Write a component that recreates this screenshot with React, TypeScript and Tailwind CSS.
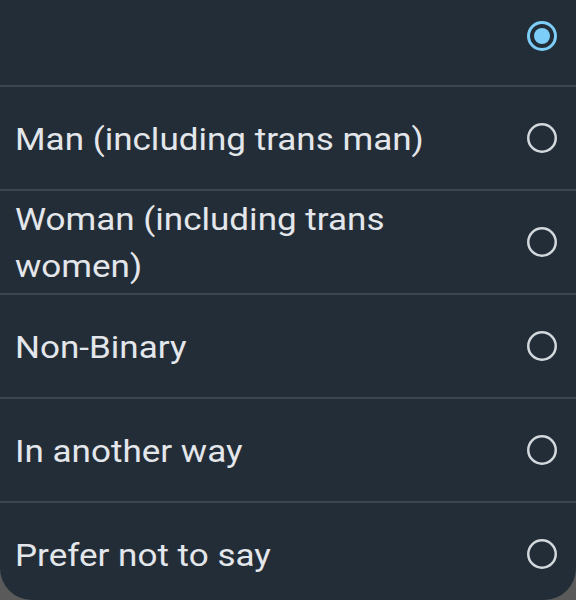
const options = [
  "Man (including trans man)",
  "Woman (including trans women)",
  "Non-Binary",
  "In another way",
  "Prefer not to say",
];

const Radio = ({ checked }: { checked?: boolean }) => (
  <svg width="34" height="34" viewBox="0 0 34 34" className="shrink-0">
    {checked ? (
      <>
        <circle cx="17" cy="17" r="13.5" fill="none" stroke="#7ccdf8" strokeWidth="3" />
        <circle cx="17" cy="17" r="8" fill="#7ccdf8" />
      </>
    ) : (
      <circle cx="17" cy="17" r="13.75" fill="none" stroke="#d3d8dc" strokeWidth="2.5" />
    )}
  </svg>
);

export default function App() {
  return (
    <div className="w-[576px] h-[600px] bg-[#5a5a5a] font-['Roboto',sans-serif]">
      <div className="h-full flex flex-col bg-[#232d37] rounded-b-[32px] overflow-hidden">
        <div className="h-[85px] shrink-0 flex items-center justify-end pr-[17px] pb-[14px]">
          <Radio checked />
        </div>
        {options.map((label) => (
          <div
            key={label}
            className="h-[104px] shrink-0 flex items-center justify-between border-t-2 border-[#3a4550] pl-[15px] pr-[17px]"
          >
            <span className="text-[31px] leading-[47px] text-[#e3e7eb] max-w-[372px] origin-left scale-x-[1.13] pt-[2px]">
              {label}
            </span>
            <Radio />
          </div>
        ))}
      </div>
    </div>
  );
}
